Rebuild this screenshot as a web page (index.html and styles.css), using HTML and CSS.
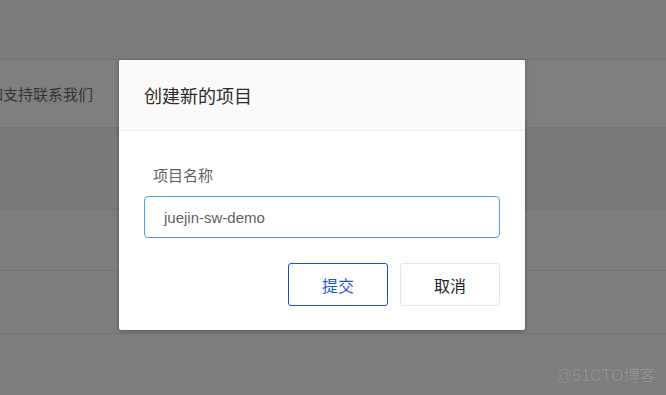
FILE: index.html
```html
<!DOCTYPE html>
<html lang="zh-CN">
<head>
<meta charset="utf-8">
<title>创建新的项目</title>
<link rel="stylesheet" href="styles.css">
</head>
<body>
<div class="page">
  <div class="bg-top"></div>
  <div class="bg-row bg-row-text"><span class="bg-text">如支持联系我们</span></div>
  <div class="bg-row bg-row-a"></div>
  <div class="bg-row bg-row-b"></div>
  <div class="bg-row bg-row-c"></div>
  <div class="bg-rest"></div>

  <div class="dialog">
    <div class="dialog-header">创建新的项目</div>
    <div class="dialog-body">
      <div class="field-label">项目名称</div>
      <div class="field-input">juejin-sw-demo</div>
      <div class="actions">
        <div class="btn btn-primary">提交</div>
        <div class="btn btn-default">取消</div>
      </div>
    </div>
  </div>

  <div class="watermark">@51CTO博客</div>
</div>
</body>
</html>
```

FILE: styles.css
```css
* { box-sizing: border-box; }
html, body {
  margin: 0;
  padding: 0;
}
body {
  width: 666px;
  height: 395px;
  overflow: hidden;
  background: #7e7e7e;
  font-family: "Liberation Sans", "Noto Sans CJK SC", sans-serif;
}
.page {
  position: relative;
  width: 666px;
  height: 395px;
  display: flex;
  flex-direction: column;
  overflow: hidden;
}
.bg-top {
  height: 60px;
  background: #7b7b7b;
  border-bottom: 1px solid #737373;
  flex-shrink: 0;
}
.bg-row {
  flex-shrink: 0;
  border-bottom: 1px solid #737373;
}
.bg-row-text {
  height: 68px;
  background: #7f7f7f;
  display: flex;
  align-items: center;
  overflow: hidden;
}
.bg-text {
  margin-left: -12px;
  font-size: 15px;
  color: #343434;
  white-space: nowrap;
}
.bg-row-a {
  height: 82px;
  background: #7a7a7a;
}
.bg-row-b {
  height: 61px;
  background: #7e7e7e;
}
.bg-row-c {
  height: 63px;
  background: #7e7e7e;
}
.bg-rest {
  flex: 1;
  background: #7e7e7e;
}

.dialog {
  position: absolute;
  left: 119px;
  top: 60px;
  width: 406px;
  background: #ffffff;
  border-radius: 2px;
  box-shadow: 0 1px 4px rgba(0, 0, 0, 0.35);
  overflow: hidden;
}
.dialog-header {
  height: 71px;
  background: #fafafa;
  border-bottom: 1px solid #e8e8e8;
  padding-left: 25px;
  display: flex;
  align-items: center;
  font-size: 18px;
  color: #2b2b2b;
}
.dialog-body {
  padding: 35px 25px 24px;
}
.field-label {
  padding-left: 9px;
  font-size: 15px;
  line-height: 20px;
  color: #5e5e5e;
}
.field-input {
  margin-top: 10px;
  height: 42px;
  border: 1px solid #4b9ff4;
  border-radius: 4px;
  padding-left: 19px;
  display: flex;
  align-items: center;
  font-size: 15px;
  color: #5f5f66;
}
.actions {
  margin-top: 25px;
  display: flex;
  justify-content: flex-end;
  gap: 12px;
}
.btn {
  width: 100px;
  height: 43px;
  border-radius: 3px;
  display: flex;
  align-items: center;
  justify-content: center;
  font-size: 16px;
}
.btn-primary {
  border: 1px solid #1650c6;
  color: #1f57d2;
}
.btn-default {
  border: 1px solid #e6e6e6;
  color: #222222;
}

.watermark {
  position: absolute;
  left: 556px;
  top: 366px;
  font-size: 16px;
  line-height: 20px;
  color: #959595;
  text-shadow: 0 0 1px #666666;
  white-space: nowrap;
}
```
